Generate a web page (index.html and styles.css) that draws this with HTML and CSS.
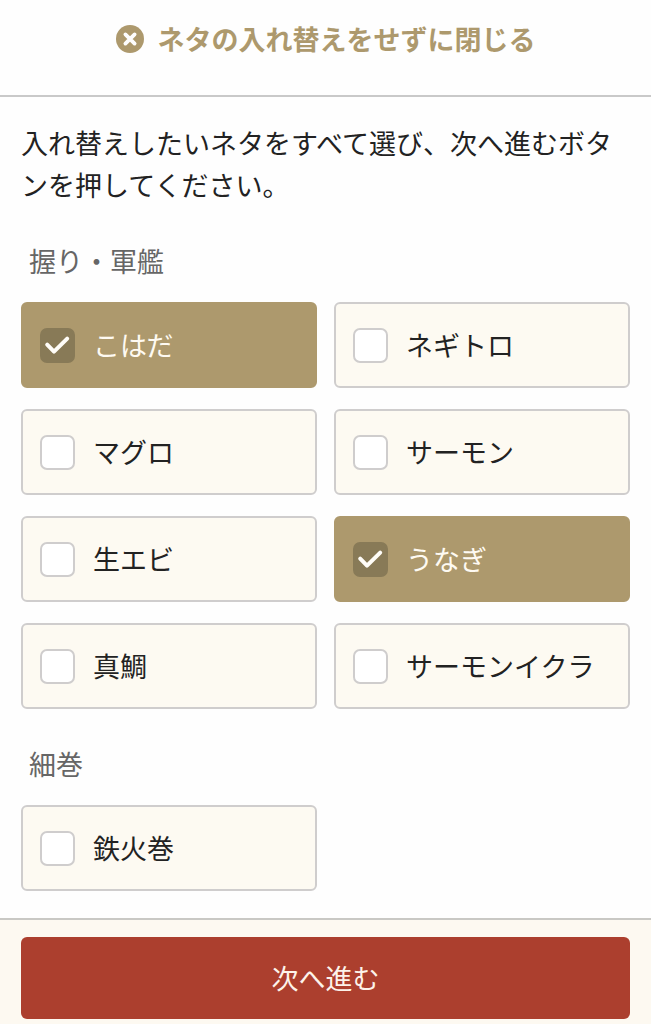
FILE: index.html
```html
<!DOCTYPE html>
<html lang="ja">
<head>
<meta charset="utf-8">
<meta name="viewport" content="width=device-width, initial-scale=1">
<title>ネタの入れ替え</title>
<link rel="stylesheet" href="styles.css">
</head>
<body>
<header class="header">
  <button type="button" class="close">
    <svg class="close-icon" viewBox="0 0 28 28" aria-hidden="true">
      <circle cx="14" cy="14" r="14" fill="currentColor"/>
      <path d="M9.4 9.4l9.2 9.2M18.6 9.4l-9.2 9.2" stroke="#fefefe" stroke-width="3.8" stroke-linecap="round"/>
    </svg>
    <span>ネタの入れ替えをせずに閉じる</span>
  </button>
</header>

<main class="main">
  <p class="lead">入れ替えしたいネタをすべて選び、次へ進むボタンを押してください。</p>

  <section class="group" aria-labelledby="nigiri">
    <h2 class="group-title" id="nigiri">握り・軍艦</h2>
    <div class="options">
      <label class="option">
        <span class="tick"><input type="checkbox" class="box" checked><svg class="mark" viewBox="0 0 35 35" aria-hidden="true"><path d="M7.2 16.6l6.8 7L27.2 10.6"/></svg></span>
        <span>こはだ</span>
      </label>
      <label class="option">
        <span class="tick"><input type="checkbox" class="box"><svg class="mark" viewBox="0 0 35 35" aria-hidden="true"><path d="M7.2 16.6l6.8 7L27.2 10.6"/></svg></span>
        <span>ネギトロ</span>
      </label>
      <label class="option">
        <span class="tick"><input type="checkbox" class="box"><svg class="mark" viewBox="0 0 35 35" aria-hidden="true"><path d="M7.2 16.6l6.8 7L27.2 10.6"/></svg></span>
        <span>マグロ</span>
      </label>
      <label class="option">
        <span class="tick"><input type="checkbox" class="box"><svg class="mark" viewBox="0 0 35 35" aria-hidden="true"><path d="M7.2 16.6l6.8 7L27.2 10.6"/></svg></span>
        <span>サーモン</span>
      </label>
      <label class="option">
        <span class="tick"><input type="checkbox" class="box"><svg class="mark" viewBox="0 0 35 35" aria-hidden="true"><path d="M7.2 16.6l6.8 7L27.2 10.6"/></svg></span>
        <span>生エビ</span>
      </label>
      <label class="option">
        <span class="tick"><input type="checkbox" class="box" checked><svg class="mark" viewBox="0 0 35 35" aria-hidden="true"><path d="M7.2 16.6l6.8 7L27.2 10.6"/></svg></span>
        <span>うなぎ</span>
      </label>
      <label class="option">
        <span class="tick"><input type="checkbox" class="box"><svg class="mark" viewBox="0 0 35 35" aria-hidden="true"><path d="M7.2 16.6l6.8 7L27.2 10.6"/></svg></span>
        <span>真鯛</span>
      </label>
      <label class="option">
        <span class="tick"><input type="checkbox" class="box"><svg class="mark" viewBox="0 0 35 35" aria-hidden="true"><path d="M7.2 16.6l6.8 7L27.2 10.6"/></svg></span>
        <span>サーモンイクラ</span>
      </label>
    </div>
  </section>

  <section class="group" aria-labelledby="hosomaki">
    <h2 class="group-title" id="hosomaki">細巻</h2>
    <div class="options">
      <label class="option">
        <span class="tick"><input type="checkbox" class="box"><svg class="mark" viewBox="0 0 35 35" aria-hidden="true"><path d="M7.2 16.6l6.8 7L27.2 10.6"/></svg></span>
        <span>鉄火巻</span>
      </label>
    </div>
  </section>
</main>

<footer class="footer">
  <button type="button" class="next">次へ進む</button>
</footer>
</body>
</html>
```
FILE: styles.css
```css
*, *::before, *::after {
  box-sizing: border-box;
}

body {
  margin: 0;
  min-height: 100vh;
  display: flex;
  flex-direction: column;
  background: #fefefe;
  color: #222;
  font-family: "Noto Sans CJK JP", sans-serif;
  font-size: 27px;
  line-height: 42px;
}

button {
  border: 0;
  font: inherit;
  cursor: pointer;
}

.header {
  display: flex;
  justify-content: center;
  padding: 18px 21px 35px;
  border-bottom: 2px solid #c9c9c9;
}

.close {
  display: flex;
  align-items: center;
  gap: 14px;
  padding: 0;
  background: none;
  color: #ad996d;
  font-weight: 700;
}

.close-icon {
  width: 28px;
  height: 28px;
}

.main {
  flex: 1;
  padding: 25px 21px 27px;
}

.lead {
  margin: 0;
}

.group {
  padding-top: 34px;
}

.group-title {
  margin: 0 0 20px;
  padding-left: 8px;
  color: #666;
  font-size: 27px;
  font-weight: 400;
}

.options {
  display: grid;
  grid-template-columns: 1fr 1fr;
  gap: 21px 17px;
}

.option {
  display: flex;
  align-items: center;
  gap: 18px;
  min-height: 86px;
  padding: 8px 17px;
  border: 2px solid #cfcdcd;
  border-radius: 6px;
  background: #fdfaf2;
  cursor: pointer;
}

.option:has(.box:checked) {
  border-color: #ad996d;
  background: #ad996d;
  color: #fefaf2;
}

.tick {
  display: grid;
  flex: none;
}

.box,
.mark {
  grid-area: 1 / 1;
  width: 35px;
  height: 35px;
}

.box {
  appearance: none;
  margin: 0;
  border: 2px solid #cfcdcd;
  border-radius: 7px;
  background: #fff;
}

.box:checked {
  border-color: #887a57;
  background: #887a57;
}

.mark {
  display: none;
  fill: none;
  stroke: #fffdf8;
  stroke-width: 4;
  stroke-linecap: round;
  stroke-linejoin: round;
  pointer-events: none;
}

.box:checked + .mark {
  display: block;
}

.footer {
  padding: 17px 21px 6px;
  border-top: 2px solid #c9c8c4;
  background: #fdf9f1;
}

.next {
  display: block;
  width: 100%;
  padding: 20px;
  border-radius: 6px;
  background: #ac3f2e;
  color: #fdf3ea;
}
```
